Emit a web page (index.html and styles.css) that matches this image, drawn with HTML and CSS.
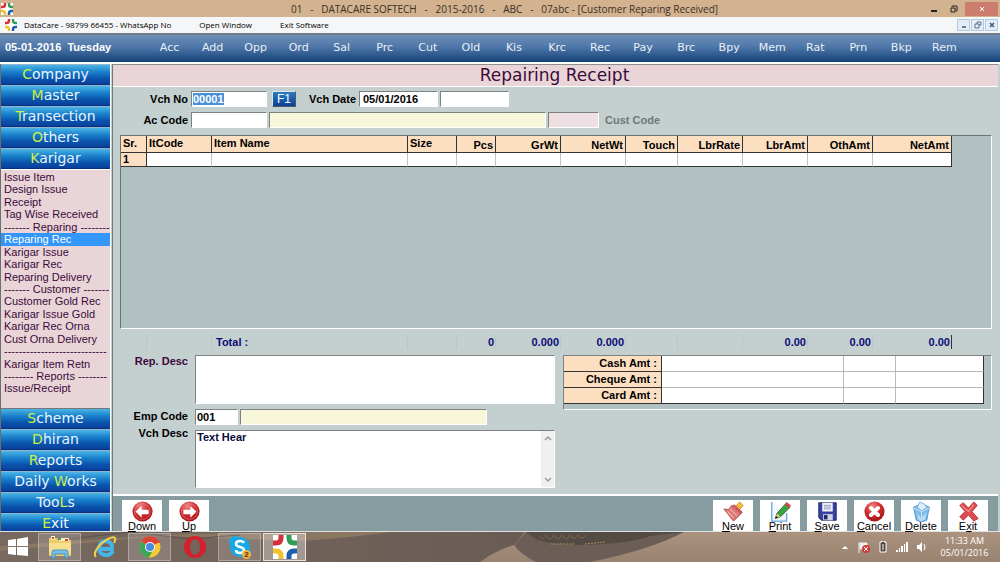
FILE: index.html
```html
<!DOCTYPE html>
<html lang="en">
<head>
   <meta charset="utf-8">
   <meta name="viewport" content="width=device-width, initial-scale=1">
   <title>DATACARE SOFTECH - Customer Reparing Received</title>
   <link rel="stylesheet" href="styles.css">
</head>
<body>
   <svg class="defs" width="0" height="0" aria-hidden="true">
      <defs>
         <symbol id="logo" viewBox="0 0 24 24">
            <rect width="24" height="24" fill="#fff"/>
            <g fill="none" stroke-width="5">
               <path d="M0 8 H3 Q8 8 8 3 V0" stroke="#d5303a"/>
               <path d="M24 8 H21 Q16 8 16 3 V0" stroke="#2f9e55"/>
               <path d="M0 16 H3 Q8 16 8 21 V24" stroke="#f2c22e"/>
               <path d="M24 16 H21 Q16 16 16 21 V24" stroke="#1d5fae"/>
            </g>
         </symbol>
         <radialGradient id="ball" cx="40%" cy="25%" r="75%">
            <stop offset="0" stop-color="#f08a88"/>
            <stop offset=".5" stop-color="#d22f32"/>
            <stop offset="1" stop-color="#a81418"/>
         </radialGradient>
      </defs>
   </svg>

   <header class="titlebar">
      <svg class="logo"><use href="#logo"/></svg>
      <h1>01   -   DATACARE SOFTECH   -   2015-2016   -   ABC   -   07abc - [Customer Reparing Received]</h1>
      <div class="winbtns">
         <button type="button" aria-label="Minimize"><svg width="8" height="8"><path d="M1 6h6" stroke="#222" stroke-width="2"/></svg></button>
         <button type="button" aria-label="Restore"><svg width="8" height="8"><path d="M2 2V1h5v5H6M1 3h4v4H1z" fill="none" stroke="#222"/></svg></button>
         <button type="button" class="close" aria-label="Close"><svg width="8" height="8"><path d="M2 2l4 4M6 2L2 6" stroke="#fff"/></svg></button>
      </div>
   </header>

   <nav class="menubar">
      <svg class="logo"><use href="#logo"/></svg>
      <a href="#">DataCare - 98799 66455 - WhatsApp No</a>
      <a href="#">Open Window</a>
      <a href="#">Exit Software</a>
      <div class="childbtns">
         <button type="button" aria-label="Minimize window"><svg width="8" height="8"><path d="M2 6h4" stroke="#445a78" stroke-width="1.5"/></svg></button>
         <button type="button" aria-label="Restore window"><svg width="8" height="8"><path d="M3 3V1h4v3H5M1 3h4v4H1z" fill="none" stroke="#5b7190"/></svg></button>
         <button type="button" aria-label="Close window"><svg width="8" height="8"><path d="M2 2l4 4M6 2L2 6" stroke="#445a78" stroke-width="1.5"/></svg></button>
      </div>
   </nav>

   <nav class="shortcuts">
      <div class="today">05-01-2016&nbsp; Tuesday</div>
      <a href="#">Acc</a>
      <a href="#">Add</a>
      <a href="#">Opp</a>
      <a href="#">Ord</a>
      <a href="#">Sal</a>
      <a href="#">Prc</a>
      <a href="#">Cut</a>
      <a href="#">Old</a>
      <a href="#">Kis</a>
      <a href="#">Krc</a>
      <a href="#">Rec</a>
      <a href="#">Pay</a>
      <a href="#">Brc</a>
      <a href="#">Bpy</a>
      <a href="#">Mem</a>
      <a href="#">Rat</a>
      <a href="#">Prn</a>
      <a href="#">Bkp</a>
      <a href="#">Rem</a>
   </nav>

   <div class="workspace">
      <aside class="sidebar">
         <div class="group top">
            <button type="button"><b>C</b>ompany</button>
            <button type="button"><b>M</b>aster</button>
            <button type="button"><b>T</b>ransection</button>
            <button type="button"><b>O</b>thers</button>
            <button type="button"><b>K</b>arigar</button>
         </div>
         <ul class="items">
            <li><a href="#">Issue Item</a></li>
            <li><a href="#">Design Issue</a></li>
            <li><a href="#">Receipt</a></li>
            <li><a href="#">Tag Wise Received</a></li>
            <li>------- Reparing --------</li>
            <li class="selected"><a href="#">Reparing Rec</a></li>
            <li><a href="#">Karigar Issue</a></li>
            <li><a href="#">Karigar Rec</a></li>
            <li><a href="#">Reparing Delivery</a></li>
            <li>------- Customer -------</li>
            <li><a href="#">Customer Gold Rec</a></li>
            <li><a href="#">Karigar Issue Gold</a></li>
            <li><a href="#">Karigar Rec Orna</a></li>
            <li><a href="#">Cust Orna Delivery</a></li>
            <li>----------------------------</li>
            <li><a href="#">Karigar Item Retn</a></li>
            <li>-------- Reports --------</li>
            <li><a href="#">Issue/Receipt</a></li>
         </ul>
         <div class="group">
            <button type="button"><b>S</b>cheme</button>
            <button type="button"><b>D</b>hiran</button>
            <button type="button"><b>R</b>eports</button>
            <button type="button">Daily <b>W</b>orks</button>
            <button type="button">Too<b>L</b>s</button>
            <button type="button" class="last"><b>E</b>xit</button>
         </div>
      </aside>

      <main class="voucher">
         <h2>Repairing Receipt</h2>
         <form class="form">
            <div class="row">
               <label for="vchno">Vch No</label>
               <span class="field code"><input id="vchno" type="text" value="00001"><mark>00001</mark></span>
               <button type="button" class="f1">F1</button>
               <label class="datelabel" for="vchdate">Vch Date</label>
               <input class="date" id="vchdate" type="text" value="05/01/2016">
               <input class="extra" type="text" aria-label="Voucher time">
            </div>
            <div class="row">
               <label for="accode">Ac Code</label>
               <input class="code" id="accode" type="text">
               <input class="name" type="text" aria-label="Account name">
               <input class="cust" id="custcode" type="text">
               <label class="custlabel" for="custcode">Cust Code</label>
            </div>

            <div class="sheet">
               <table class="grid">
                  <colgroup>
                     <col class="sr"><col class="amt"><col class="item"><col class="size"><col class="pcs"><col class="amt"><col class="amt"><col class="touch"><col class="amt"><col class="amt"><col class="amt"><col class="net">
                  </colgroup>
                  <thead>
                     <tr>
                        <th>Sr.</th><th>ItCode</th><th>Item Name</th><th>Size</th>
                        <th class="num">Pcs</th><th class="num">GrWt</th><th class="num">NetWt</th><th class="num">Touch</th>
                        <th class="num">LbrRate</th><th class="num">LbrAmt</th><th class="num">OthAmt</th><th class="num">NetAmt</th>
                     </tr>
                  </thead>
                  <tbody>
                     <tr>
                        <th>1</th><td></td><td></td><td></td><td></td><td></td><td></td><td></td><td></td><td></td><td></td><td></td>
                     </tr>
                  </tbody>
               </table>
            </div>

            <table class="totals">
               <colgroup>
                  <col class="sr"><col class="amt"><col class="item"><col class="size"><col class="pcs"><col class="amt"><col class="amt"><col class="touch"><col class="amt"><col class="amt"><col class="amt"><col class="net">
               </colgroup>
               <tr>
                  <td></td><td></td><th>Total :</th><td></td><td>0</td><td>0.000</td><td>0.000</td><td></td><td></td><td>0.00</td><td>0.00</td><td>0.00</td>
               </tr>
            </table>

            <div class="lower">
               <div class="notes">
                  <label class="rep" for="repdesc">Rep. Desc</label>
                  <textarea id="repdesc"></textarea>
                  <label for="empcode">Emp Code</label>
                  <div class="emp">
                     <input class="empcode" id="empcode" type="text" value="001">
                     <input class="empname" type="text" aria-label="Employee name">
                  </div>
                  <label class="vch" for="vchdesc">Vch Desc</label>
                  <div class="memo">
                     <textarea id="vchdesc">Text Hear</textarea>
                     <div class="scroll">
                        <svg width="8" height="6"><path d="M1 5l3-3 3 3" fill="none" stroke="#999" stroke-width="1.5"/></svg>
                        <svg width="8" height="6"><path d="M1 1l3 3 3-3" fill="none" stroke="#999" stroke-width="1.5"/></svg>
                     </div>
                  </div>
               </div>
               <div class="payments">
                  <table>
                     <colgroup><col class="paylabel"><col class="paymain"><col class="payref"><col class="payamt"></colgroup>
                     <tr><th>Cash Amt :</th><td></td><td></td><td></td></tr>
                     <tr><th>Cheque Amt :</th><td></td><td></td><td></td></tr>
                     <tr><th>Card Amt :</th><td></td><td></td><td></td></tr>
                  </table>
               </div>
            </div>
         </form>

         <div class="toolbar">
            <button type="button">
               <svg viewBox="0 0 24 24"><circle cx="12" cy="12" r="11.5" fill="url(#ball)"/><circle cx="12" cy="12" r="9" fill="none" stroke="#f0a09c" stroke-opacity=".5"/><path d="M4 12l7-6v4h8v5h-8v4z" fill="#fff"/></svg>
               <span><u>D</u>own</span>
            </button>
            <button type="button" class="up">
               <svg viewBox="0 0 24 24"><circle cx="12" cy="12" r="11.5" fill="url(#ball)"/><circle cx="12" cy="12" r="9" fill="none" stroke="#f0a09c" stroke-opacity=".5"/><path d="M20 12l-7-6v4H5v5h8v4z" fill="#fff"/></svg>
               <span><u>U</u>p</span>
            </button>
            <button type="button">
               <svg viewBox="0 0 24 24"><path d="M13 8l6-7 4 4-6 7z" fill="#f4bd3f" stroke="#c88a25"/><path d="M1 9l5 1 4-5 12 8-10 10z" fill="#dd7773" stroke="#a94d4e"/><path d="M5 12l7 7M8 9l8 8" stroke="#f3b1a8" stroke-width="1.5" fill="none"/><path d="M10 5l3-1 9 8-2 3z" fill="#c65b57"/></svg>
               <span><u>N</u>ew</span>
            </button>
            <button type="button">
               <svg viewBox="0 0 24 24"><path d="M2 1v22h17V14" fill="#f2f8ff" stroke="#66a8dd" stroke-width="1.5"/><path d="M6 20l2-6L18 3l5 4-11 11z" fill="#39a344" stroke="#245f28"/><path d="M17 4l2-3 5 4-2 3z" fill="#d8424b"/><path d="M6 20l2-6 4 4z" fill="#e9bd78"/><path d="M6 20l1-3 2 2z" fill="#111"/></svg>
               <span><u>P</u>rint</span>
            </button>
            <button type="button">
               <svg viewBox="0 0 24 24"><path d="M2 2h20v20H5l-3-3z" fill="#3542a2" stroke="#1c2568"/><path d="M6 2h12v10H6z" fill="#eef1f8"/><path d="M8 5h8M8 7h8M8 9h8" stroke="#8b93b8"/><path d="M7 15h11v7H7z" fill="#cfd3df"/><path d="M8 16h4v5H8z" fill="#202a6c"/></svg>
               <span><u>S</u>ave</span>
            </button>
            <button type="button">
               <svg viewBox="0 0 24 24"><circle cx="12" cy="12" r="11.5" fill="url(#ball)"/><path d="M8 8l8 8M16 8l-8 8" stroke="#fff" stroke-width="4.5" stroke-linecap="round"/></svg>
               <span><u>C</u>ancel</span>
            </button>
            <button type="button">
               <svg viewBox="0 0 24 24"><path d="M3 7l9-4 9 4-3 15-6 2-6-2z" fill="#7dbbea" stroke="#4c8fca"/><path d="M7 7l3-6 6 3 2 4-6 3z" fill="#d9edfb" stroke="#75aedd"/><path d="M3 8l9 4 9-4M12 12v11" fill="none" stroke="#d6ecfb"/><path d="M7 13l4 6 4-3 3-4-2 9-4 2-4-2z" fill="#b7dbf6"/></svg>
               <span><u>D</u>elete</span>
            </button>
            <button type="button">
               <svg viewBox="0 0 24 24"><path d="M2 5l4-3 6 6 6-7 4 4-6 7 7 8-5 3-6-7-6 6-4-4 6-6z" fill="#dd4a50" stroke="#b8343c"/><path d="M4 5l8 7 6-8" fill="none" stroke="#f08a8c" stroke-width="1.5"/></svg>
               <span>E<u>x</u>it</span>
            </button>
         </div>
      </main>
   </div>

   <footer class="taskbar">
      <svg class="wallpaper" viewBox="0 0 1000 30" preserveAspectRatio="none" aria-hidden="true">
         <defs>
            <linearGradient id="sand" x1="0" x2="0" y1="0" y2="1"><stop offset="0" stop-color="#ab9380"/><stop offset="1" stop-color="#9a8271"/></linearGradient>
            <linearGradient id="dusk"><stop offset="0" stop-color="#786960"/><stop offset="1" stop-color="#6a5b54"/></linearGradient>
         </defs>
         <rect width="1000" height="30" fill="url(#sand)"/>
         <path d="M0 0H525L514 13Q495 19 480 30H0z" fill="url(#dusk)"/>
         <path d="M0 19L160 4L300 9Q350 6 390 0H310L180 2L0 14z" fill="#8a7762"/>
         <path d="M60 8L130 0L190 7L240 3" fill="none" stroke="#5c504b"/>
         <path d="M514 13L526 0H684Q650 18 590 30H536Q520 22 514 13z" fill="#6b5e57"/>
         <path d="M530 3Q540 13 580 13Q630 12 650 4L684 0H526z" fill="#544b44"/>
         <path d="M538 3q4 7 8 0q4 8 8 0q4 8 8 0q4 8 8 0q4 7 8 0q4 6 8 0" fill="none" stroke="#7b6850"/>
         <path d="M551 12h24M585 12l20-2" stroke="#b08a5c" stroke-dasharray="2 1"/>
      </svg>
      <button type="button" class="start" aria-label="Start">
         <svg width="20" height="20" viewBox="0 0 20 20"><path d="M0 3l8-1v7H0zM9 2l11-2v9H9zM0 10h8v8l-8-1zM9 10h11v9L9 18z" fill="#fff"/></svg>
      </button>
      <button type="button" class="open" aria-label="File Explorer">
         <svg width="24" height="24" viewBox="0 0 24 24"><path d="M1 3h8l1 2h13v16H1z" fill="#edcb69"/><path d="M3 1h4v4H3zM11 3h10v3H11z" fill="#f7f0c8"/><path d="M4 2h2v2H4zM17 4h3v2h-3z" fill="#d3473b"/><path d="M10 3h3v2h-3z" fill="#3f9a55"/><path d="M1 8h22v11H1z" fill="#f7df91"/><path d="M4 23v-6q0-2 2-2h12q2 0 2 2v6h-3v-4H7v4z" fill="#78bde0" stroke="#4c94be"/></svg>
      </button>
      <button type="button" aria-label="Internet Explorer">
         <svg width="24" height="24" viewBox="0 0 24 24"><path d="M20 16Q17 21 12 20Q6 19 6 13Q7 6 13 6Q20 7 19 14H7" fill="none" stroke="#45b4e8" stroke-width="4"/><path d="M3 22Q-1 18 9 8Q19 0 22 3Q23 4 21 8" fill="none" stroke="#f2cf4c" stroke-width="2"/></svg>
      </button>
      <button type="button" class="open" aria-label="Chrome">
         <svg width="22" height="22" viewBox="0 0 22 22"><circle cx="11" cy="11" r="10.500" fill="#f4ca35"/><path d="M11 11L2 5.500A10.500 10.500 0 0 1 20.500 6z" fill="#dc4437"/><path d="M2 5.500A10.500 10.500 0 0 0 10 21.500L14 14 11 11z" fill="#3fa55a"/><path d="M11 6h9.500" stroke="#dc4437" stroke-width="2"/><circle cx="11" cy="11" r="5" fill="#fff"/><circle cx="11" cy="11" r="4" fill="#4a87e2"/></svg>
      </button>
      <button type="button" aria-label="Opera">
         <svg width="24" height="24" viewBox="0 0 24 24"><path fill-rule="evenodd" d="M12 1a11 11 0 0 0 0 22a11 11 0 0 0 0-22zM12 4a5 8 0 0 1 0 16a5 8 0 0 1 0-16z" fill="#d71f2b"/></svg>
      </button>
      <button type="button" class="open skype" aria-label="Skype">
         <svg width="24" height="24" viewBox="0 0 24 24"><circle cx="12" cy="12" r="10" fill="#16a9e5"/><circle cx="7" cy="7" r="6" fill="#16a9e5"/><circle cx="17" cy="17" r="6" fill="#16a9e5"/><path d="M16 8Q15 6 12 6Q8 6 8 9Q8 11 12 12Q16 13 16 15Q16 18 12 18Q8 18 8 15" fill="none" stroke="#fff" stroke-width="2.500"/></svg>
         <span class="badge">2</span>
      </button>
      <button type="button" class="open active" aria-label="DataCare">
         <svg width="24" height="24"><use href="#logo"/></svg>
      </button>
      <div class="tray">
         <svg width="8" height="12"><path d="M1 8l3-3 3 3z" fill="#fff"/></svg>
         <svg width="12" height="12"><path d="M1 1v11M2 2h7v6H2z" fill="#eee" stroke="#eee"/><circle cx="8" cy="8" r="4" fill="#d23a35"/><path d="M6 6l4 4M10 6l-4 4" stroke="#fff"/></svg>
         <svg width="8" height="12"><path d="M3 0h2v1h2v10H1V1h2z" fill="#4b4440" stroke="#fff"/><path d="M3 4h2M3 6h2M3 8h2" stroke="#fff"/></svg>
         <svg width="12" height="12"><path d="M0 9h2v2H0zM3 7h1v4H3zM5 5h2v6H5zM8 3h1v8H8zM10 1h2v10h-2z" fill="#fff"/></svg>
         <svg width="10" height="12"><path d="M0 4h2l3-3v10L2 8H0z" fill="#fff"/><path d="M7 3Q9 6 7 9" fill="none" stroke="#fff"/></svg>
      </div>
      <div class="clock">11:33 AM<br>05/01/2016</div>
   </footer>
</body>
</html>
```
FILE: styles.css
```css
* {
   box-sizing:border-box;
}
body {
   margin:0;
   min-height:100vh;
   display:flex;
   flex-direction:column;
   font-family:"Liberation Sans",Arial,sans-serif;
   font-size:11px;
   color:#000;
   background-color:#c4cfcf;
}
a {
   color:inherit;
   text-decoration:none;
}
button, input, textarea {
   margin:0;
   padding:0;
   font:inherit;
   color:inherit;
   border:0;
   border-radius:0;
}
.defs {
   position:absolute;
}

/* title and menu */
.titlebar {
   display:flex;
   align-items:center;
   height:17px;
   padding:0 2px 0 1px;
   background-color:#d2b28f;
}
.logo {
   width:12px;
   height:12px;
}
.titlebar h1 {
   flex:1;
   margin:0;
   padding-left:72px;
   font:10px/16px "Open Sans",sans-serif;
   color:#3c3024;
   text-align:center;
   white-space:pre;
}
.winbtns {
   display:flex;
}
.winbtns button {
   display:flex;
   align-items:center;
   justify-content:center;
   width:20px;
   height:14px;
   background:none;
}
.winbtns .close {
   width:33px;
   margin-left:1px;
   background-color:#cd7d6e;
}
.menubar {
   display:flex;
   align-items:center;
   height:16px;
   padding:0 2px 0 5px;
   font:8px/14px "Open Sans",sans-serif;
   background-color:#f5f6f7;
}
.menubar a {
   margin-right:28px;
}
.menubar .logo {
   margin-right:7px;
}
.childbtns {
   display:flex;
   gap:1px;
   margin-left:auto;
}
.childbtns button {
   display:flex;
   align-items:center;
   justify-content:center;
   width:13px;
   height:12px;
   border:1px solid #b5c9dc;
   background-color:#e3edf7;
}
.shortcuts {
   display:flex;
   align-items:center;
   height:31px;
   padding:0 34px 2px 0;
   font:11px/24px "DejaVu Sans",Verdana,sans-serif;
   color:#e8eef6;
   background-image:linear-gradient(#6f8fb6,#4d76a8 45%,#164378);
   border-top:2px solid #717d89;
   border-bottom:2px solid #fff;
}
.shortcuts a {
   flex:1;
   text-align:center;
}
.today {
   flex:0 0 148px;
   padding:0 0 2px 5px;
   font:bold 11px/22px "Liberation Sans",Arial,sans-serif;
   color:#fff;
}

/* left menu */
.workspace {
   flex:1;
   display:flex;
   border-bottom:1px solid #dfe3e0;
}
.sidebar {
   flex:0 0 111px;
   min-width:0;
   display:flex;
   flex-direction:column;
   border-left:1px solid #6a6f72;
   border-right:1px solid #fff;
   background-color:#e9d5d7;
}
.group {
   display:flex;
   flex-direction:column;
   gap:1px;
   background-color:#8fb5d2;
}
.top {
   padding-top:1px;
}
.group button {
   height:20px;
   font:14px/19px "DejaVu Sans",Verdana,sans-serif;
   color:#e9f4ff;
   white-space:nowrap;
   background-image:linear-gradient(#4cb4e4,#1a83cd 35%,#0a55ae 70%,#0a3f9c);
   border-bottom:1px solid #06327c;
}
.group button b {
   font-weight:normal;
   color:#cdf04a;
}
.group .last {
   height:17px;
   padding-top:2px;
   line-height:15px;
   border-bottom:0;
}
.items {
   flex:1;
   display:flex;
   flex-direction:column;
   margin:0;
   padding:1px 0 13px;
   list-style:none;
   font-size:11px;
   color:#3b0a3c;
   border-top:1px solid #fff;
   border-bottom:1px solid #777;
}
.items li {
   flex:1;
   padding-left:3px;
   line-height:12px;
   white-space:nowrap;
}
.items .selected {
   color:#fff;
   background-color:#3296fa;
}

/* voucher */
.voucher {
   flex:1;
   min-width:0;
   display:flex;
   flex-direction:column;
   margin:0 2px 0 1px;
   border-left:1px solid #70787c;
   border-top:1px solid #8d8d8d;
}
.voucher h2 {
   margin:0;
   height:22px;
   padding-right:2px;
   font:17px/21px "DejaVu Sans",Verdana,sans-serif;
   color:#3b0a3c;
   text-align:center;
   background-color:#e9d5d7;
   border-bottom:1px solid #fff;
}
.form {
   flex:1;
   display:flex;
   flex-direction:column;
   padding:4px 6px 6px 7px;
   font-weight:bold;
}
.row {
   display:flex;
   gap:2px;
   height:16px;
   margin-bottom:5px;
}
.row label {
   flex:0 0 69px;
   padding-right:1px;
   line-height:17px;
   text-align:right;
}
.form input, .form textarea, .field, .memo {
   min-width:0;
   background-color:#fff;
   border:1px solid;
   border-color:#7c8282 #fff #fff #7c8282;
}
.form input {
   padding:0 3px;
}
.code {
   width:76px;
}
.field {
   position:relative;
}
.form .field input {
   width:100%;
   height:14px;
   padding:0 1px;
   border:0;
   display:block;
}
.field mark {
   position:absolute;
   left:1px;
   top:1px;
   line-height:12px;
   color:#fff;
   background-color:#4a90d9;
}
.row .f1 {
   width:24px;
   margin:0 10px 0 3px;
   font-size:12px;
   font-weight:normal;
   color:#fff;
   background-image:linear-gradient(#2b7ec4,#0d3f94);
   border:1px solid;
   border-color:#dfe8ee #4b5a66 #4b5a66 #dfe8ee;
}
.row .datelabel {
   flex-basis:49px;
}
.date {
   width:79px;
}
.extra {
   width:69px;
}
.form .name {
   width:277px;
   background-color:#f9f7d9;
}
.form .cust {
   width:51px;
   background-color:#eee0e2;
}
.row .custlabel {
   flex-basis:60px;
   color:#6f7777;
}
.sheet {
   flex:1;
   margin-top:2px;
   background-color:#b1c0c0;
   border:1px solid;
   border-color:#6d7373 #fff #fff #6d7373;
}
table {
   border-collapse:separate;
   border-spacing:0;
   table-layout:fixed;
}
.grid, .totals {
   width:831px;
}
.sr { width:26px; }
.amt { width:65px; }
.item { width:196px; }
.size { width:49px; }
.pcs { width:39px; }
.touch { width:52px; }
.net { width:79px; }
.grid th, .grid td {
   height:14px;
   padding:0 2px;
   line-height:13px;
   text-align:left;
   border-right:1px solid #c3c3c3;
   border-bottom:1px solid #333;
   background-color:#fff;
}
.grid th {
   background-color:#fcdfc0;
   border-right-color:#333;
}
.grid thead th {
   height:17px;
   padding-bottom:2px;
}
.grid thead .num {
   padding:2px 2px 0;
   text-align:right;
}
.grid td:last-child {
   border-right-color:#333;
}
.totals {
   margin:6px 0 6px 1px;
   color:#0b0b78;
}
.totals td, .totals th {
   height:14px;
   padding:0 1px;
   line-height:14px;
   text-align:right;
   border-right:1px solid #bac6c6;
}
.totals th {
   padding-left:4px;
   text-align:left;
}
.totals td:last-child {
   border-right-color:#333;
}
.lower {
   display:flex;
   align-items:flex-start;
   justify-content:space-between;
   gap:8px;
}
.notes {
   display:grid;
   grid-template-columns:68px 360px;
   column-gap:7px;
   row-gap:5px;
}
.notes label {
   line-height:14px;
   text-align:right;
}
.notes .rep {
   line-height:12px;
   color:#3b0a3c;
}
.notes .vch {
   line-height:6px;
}
.notes textarea {
   display:block;
   width:100%;
   height:49px;
   padding:1px 2px;
   line-height:13px;
   color:#0b0b3c;
   resize:none;
}
.emp {
   display:flex;
   gap:2px;
   height:16px;
}
.form .empcode {
   width:43px;
   padding:0 1px;
}
.form .empname {
   width:247px;
   background-color:#f9f7d9;
}
.memo {
   display:flex;
   height:58px;
}
.notes .memo textarea {
   flex:1;
   height:100%;
   padding:0 1px;
   border:0;
}
.scroll {
   display:flex;
   flex-direction:column;
   align-items:center;
   justify-content:space-between;
   width:13px;
   padding:4px 0;
   background-color:#f0f0f0;
}
.payments {
   width:430px;
   height:55px;
   background-color:#b1c0c0;
   border:1px solid;
   border-color:#7c8282 #fff #fff #7c8282;
}
.payments table {
   width:420px;
}
.paylabel { width:98px; }
.paymain { width:182px; }
.payref { width:52px; }
.payamt { width:88px; }
.payments th, .payments td {
   height:16px;
   padding:0 4px;
   line-height:15px;
   text-align:right;
   background-color:#fff;
   border-right:1px solid #b9b9b9;
   border-bottom:1px solid #b9b9b9;
}
.payments th {
   background-color:#fcdfc0;
   border-color:#333;
}
.payments td:last-child {
   border-right-color:#333;
}
.payments tr:last-child td {
   border-bottom-color:#333;
}

/* bottom buttons */
.toolbar {
   display:flex;
   gap:7px;
   height:37px;
   padding:4px 10px 0 9px;
   background-color:#879ca1;
   border-top:2px solid #fff;
}
.toolbar button {
   display:flex;
   flex-direction:column;
   align-items:center;
   justify-content:space-between;
   width:40px;
   padding-top:1px;
   font-size:11px;
   line-height:9px;
   white-space:nowrap;
   background-color:#fff;
}
.toolbar .up {
   margin-right:auto;
}
.toolbar svg {
   width:23px;
   height:22px;
}

/* taskbar */
.taskbar {
   position:relative;
   display:flex;
   align-items:center;
   gap:2px;
   height:30px;
   color:#fff;
   background-color:#a38c7a;
}
.taskbar > * {
   position:relative;
}
.taskbar .wallpaper {
   position:absolute;
   left:0;
   top:0;
   width:100%;
   height:100%;
}
.taskbar button {
   display:flex;
   align-items:center;
   justify-content:center;
   width:43px;
   height:28px;
   background:none;
}
.taskbar .start {
   width:36px;
}
.taskbar .open {
   background-color:rgba(255,255,255,.16);
   border:1px solid rgba(255,255,255,.3);
}
.taskbar .active {
   background-color:rgba(255,255,255,.35);
   border-color:#e6e2df;
}
.badge {
   position:absolute;
   right:9px;
   bottom:1px;
   width:9px;
   height:9px;
   border-radius:50%;
   font:bold 8px/9px "Liberation Sans",Arial,sans-serif;
   color:#4a2c00;
   background-color:#f3b33c;
}
.tray {
   display:flex;
   align-items:center;
   gap:9px;
   margin-left:auto;
}
.clock {
   width:71px;
   font:9px/12px "Open Sans",sans-serif;
   text-align:center;
}
```
